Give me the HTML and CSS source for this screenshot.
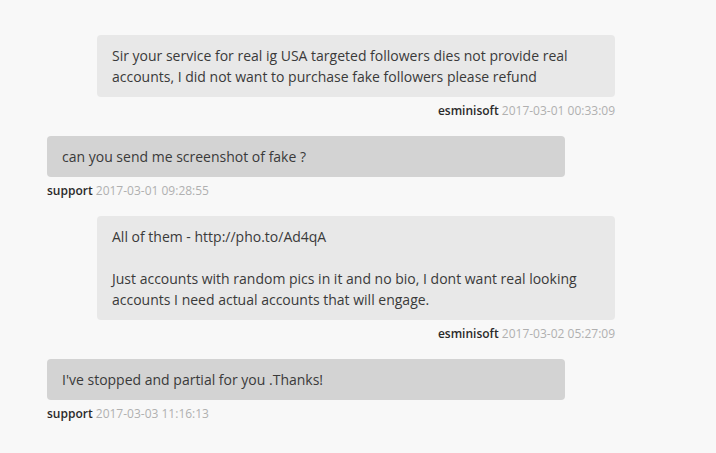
FILE: index.html
```html
<!DOCTYPE html>
<html>
<head>
<meta charset="utf-8">
<link rel="stylesheet" href="styles.css">
</head>
<body>
<div class="chat">
  <div class="msg msg-user">
    <div class="bubble">Sir your service for real ig USA targeted followers dies not provide real accounts, I did not want to purchase fake followers please refund</div>
    <div class="meta"><span class="name">esminisoft</span> <span class="date">2017-03-01 00:33:09</span></div>
  </div>
  <div class="msg msg-support">
    <div class="bubble">can you send me screenshot of fake ?</div>
    <div class="meta"><span class="name">support</span> <span class="date">2017-03-01 09:28:55</span></div>
  </div>
  <div class="msg msg-user">
    <div class="bubble">All of them - http://pho.to/Ad4qA<br><br>Just accounts with random pics in it and no bio, I dont want real looking accounts I need actual accounts that will engage.</div>
    <div class="meta"><span class="name">esminisoft</span> <span class="date">2017-03-02 05:27:09</span></div>
  </div>
  <div class="msg msg-support">
    <div class="bubble">I've stopped and partial for you .Thanks!</div>
    <div class="meta"><span class="name">support</span> <span class="date">2017-03-03 11:16:13</span></div>
  </div>
</div>
</body>
</html>
```

FILE: styles.css
```css
html, body {
  margin: 0;
  padding: 0;
  background: #f8f8f8;
}
body {
  font-family: "Open Sans", "DejaVu Sans", sans-serif;
  color: #333;
}
.chat {
  width: 568px;
  margin-left: 47px;
  padding-top: 35px;
  display: flex;
  flex-direction: column;
}
.msg {
  display: flex;
  flex-direction: column;
  margin-bottom: 16px;
}
.bubble {
  width: 518px;
  box-sizing: border-box;
  padding: 10px 15px;
  font-size: 14px;
  line-height: 21px;
  border-radius: 4px;
  color: #3a3a3a;
}
.msg-user {
  align-items: flex-end;
}
.msg-user .bubble {
  background: #e8e8e8;
}
.msg-support {
  align-items: flex-start;
}
.msg-support .bubble {
  background: #d3d3d3;
}
.meta {
  margin-top: 5px;
  font-size: 12px;
  line-height: 18px;
}
.name {
  font-weight: 600;
  color: #2a2a2a;
}
.date {
  color: #b0b0b0;
}
```
